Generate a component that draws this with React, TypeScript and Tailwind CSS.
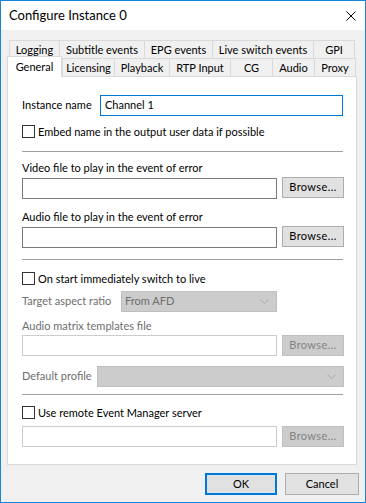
import React from 'react';

const FONT = { fontFamily: 'Lato, "Liberation Sans", sans-serif' };

const Chevron = () => (
  <svg width="9" height="5" viewBox="0 0 9 5" className="shrink-0">
    <polyline points="0.5,0.5 4.5,4.5 8.5,0.5" fill="none" stroke="#a8a8a8" strokeWidth="1" />
  </svg>
);

const CheckBox = ({ label }: { label: string }) => (
  <div className="flex items-center h-[13px]">
    <div className="w-[13px] h-[13px] border border-[#333333] bg-white shrink-0" />
    <span className="ml-[3px] leading-[15px] whitespace-nowrap">{label}</span>
  </div>
);

const Separator = ({ className }: { className: string }) => (
  <div className={`h-px bg-[#a0a0a0] w-[321px] ${className}`} />
);

const FileRow = ({ disabled, className }: { disabled?: boolean; className: string }) => (
  <div className={`flex items-start gap-[5px] ${className}`}>
    <div
      className={`w-[255px] h-[21px] bg-white border ${disabled ? 'border-[#cccccc]' : 'border-[#7a7a7a]'}`}
    />
    <div
      className={`w-[62px] h-[21px] flex items-center justify-center border tracking-[0.4px] ${
        disabled ? 'bg-[#cccccc] border-[#bfbfbf] text-[#838383]' : 'bg-[#e1e1e1] border-[#adadad] -mt-px'
      }`}
    >
      Browse...
    </div>
  </div>
);

const topTabs = [
  { name: 'Logging', w: 'w-[50px]' },
  { name: 'Subtitle events', w: 'w-[85px]' },
  { name: 'EPG events', w: 'w-[68px]' },
  { name: 'Live switch events', w: 'w-[101px]' },
  { name: 'GPI', w: 'w-[42px] border-r' },
];

const bottomTabs = [
  { name: 'Licensing', w: 'w-[52px]' },
  { name: 'Playback', w: 'w-[55px]' },
  { name: 'RTP Input', w: 'w-[61px]' },
  { name: 'CG', w: 'w-[42px]' },
  { name: 'Audio', w: 'w-[42px]' },
  { name: 'Proxy', w: 'w-[42px] border-r' },
];

export default function App() {
  return (
    <div
      className="w-[366px] h-[503px] border border-[#1883d7] bg-[#f0f0f0] flex flex-col text-[11px] text-black overflow-hidden"
      style={FONT}
    >
      {/* title bar */}
      <div className="h-[29px] bg-white flex items-center justify-between pl-[8px] pr-[9px] shrink-0">
        <span className="text-[13px] whitespace-nowrap">Configure Instance 0</span>
        <svg width="10" height="10" viewBox="0 0 10 10">
          <path d="M0.5 0.5 L9.5 9.5 M9.5 0.5 L0.5 9.5" stroke="#000" strokeWidth="1" />
        </svg>
      </div>

      {/* tabs */}
      <div className="pl-[6px] mt-[10px]">
        <div className="flex ml-[2px] h-[18px]">
          {topTabs.map((t) => (
            <div
              key={t.name}
              className={`${t.w} h-full border-l border-t border-[#d9d9d9] flex items-center justify-center pt-px whitespace-nowrap`}
            >
              {t.name}
            </div>
          ))}
        </div>
        <div className="flex h-[18px]">
          <div className="w-[55px] h-[21px] -mt-[2px] self-start relative z-10 bg-white border-l border-t border-r border-[#d9d9d9] flex items-start justify-center pt-[2px]">
            General
          </div>
          {bottomTabs.map((t) => (
            <div
              key={t.name}
              className={`${t.w} h-full border-l border-t border-[#d9d9d9] flex items-center justify-center pt-px whitespace-nowrap`}
            >
              {t.name}
            </div>
          ))}
        </div>

        {/* panel */}
        <div className="w-[350px] h-[389px] bg-white border border-[#d9d9d9] pl-[14px] pr-[12px] flex flex-col whitespace-nowrap">
          <div className="flex items-center mt-[18px] h-[21px]">
            <span className="w-[78px]">Instance name</span>
            <div className="w-[243px] h-[21px] border border-[#0078d7] flex items-center pl-[4px]">
              Channel 1
            </div>
          </div>
          <div className="mt-[9px]">
            <CheckBox label="Embed name in the output user data if possible" />
          </div>
          <Separator className="mt-[13px]" />

          <div className="mt-[8px] leading-[15px]">Video file to play in the event of error</div>
          <FileRow className="mt-[3px]" />
          <div className="mt-[10px] leading-[15px]">Audio file to play in the event of error</div>
          <FileRow className="mt-[3px]" />

          <Separator className="mt-[11px]" />
          <div className="mt-[12px]">
            <CheckBox label="On start immediately switch to live" />
          </div>

          <div className="flex items-center mt-[6px] h-[21px] text-[#6d6d6d]">
            <span className="w-[99px]">Target aspect ratio</span>
            <div className="w-[156px] h-[21px] bg-[#cccccc] border border-[#bfbfbf] flex items-center justify-between pl-[3px] pr-[7px]">
              <span>From AFD</span>
              <Chevron />
            </div>
          </div>

          <div className="mt-[6px] leading-[15px] text-[#6d6d6d]">Audio matrix templates file</div>
          <FileRow disabled className="mt-[2px]" />

          <div className="flex items-center mt-[10px] h-[21px] text-[#6d6d6d]">
            <span className="w-[75px]">Default profile</span>
            <div className="flex-1 h-[21px] bg-[#cccccc] border border-[#bfbfbf] flex items-center justify-end pr-[7px]">
              <Chevron />
            </div>
          </div>

          <Separator className="mt-[7px]" />
          <div className="mt-[11px]">
            <CheckBox label="Use remote Event Manager server" />
          </div>
          <FileRow disabled className="mt-[7px]" />
        </div>
      </div>

      {/* dialog buttons */}
      <div className="flex justify-end gap-[8px] pr-[6px] mt-[8px]">
        <div className="w-[72px] h-[22px] bg-[#e1e1e1] border-2 border-[#0078d7] flex items-center justify-center">
          OK
        </div>
        <div className="w-[74px] h-[22px] bg-[#e1e1e1] border border-[#adadad] flex items-center justify-center">
          Cancel
        </div>
      </div>
    </div>
  );
}
